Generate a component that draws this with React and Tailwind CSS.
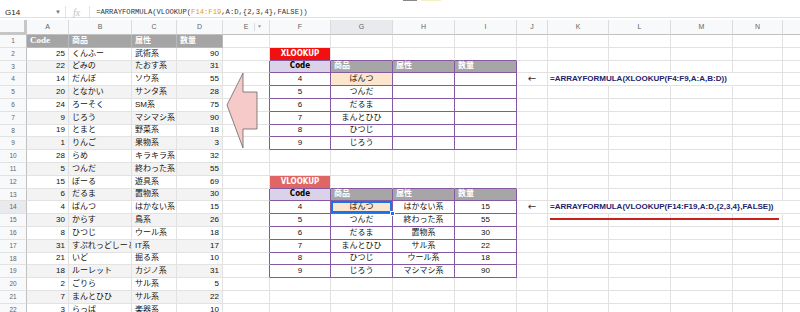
const COLS = ['A', 'B', 'C', 'D', 'E', 'F', 'G', 'H', 'I', 'J', 'K', 'L', 'M', 'N', 'O']

const sheet = [
  [25, 'くんふー', '武術系', 90],
  [22, 'どみの', 'たおす系', 31],
  [14, 'だんぼ', 'ソウ系', 55],
  [20, 'となかい', 'サンタ系', 28],
  [24, 'ろーそく', 'SM系', 75],
  [9, 'じろう', 'マシマシ系', 90],
  [19, 'とまと', '野菜系', 18],
  [1, 'りんご', '果物系', 3],
  [28, 'らめ', 'キラキラ系', 32],
  [5, 'つんだ', '終わった系', 55],
  [15, 'ぼーる', '遊具系', 69],
  [6, 'だるま', '置物系', 30],
  [4, 'ぱんつ', 'はかない系', 15],
  [30, 'からす', '鳥系', 26],
  [8, 'ひつじ', 'ウール系', 18],
  [31, 'すぷれっどしーと', 'IT系', 17],
  [21, 'いど', '掘る系', 10],
  [18, 'ルーレット', 'カジノ系', 31],
  [2, 'ごりら', 'サル系', 5],
  [7, 'まんとひひ', 'サル系', 22],
  [3, 'らっぱ', '楽器系', 10],
]

const lookup = [
  [4, 'ぱんつ', 'はかない系', 15],
  [5, 'つんだ', '終わった系', 55],
  [6, 'だるま', '置物系', 30],
  [7, 'まんとひひ', 'サル系', 22],
  [8, 'ひつじ', 'ウール系', 18],
  [9, 'じろう', 'マシマシ系', 90],
]

const ROWS = Array.from({ length: 22 }, (_, i) => i + 1)

function tableOf(r) {
  if (r >= 2 && r <= 9) return { start: 2, filled: false }
  if (r >= 12 && r <= 19) return { start: 12, filled: true }
  return null
}

function Cell({ r, c }) {
  const base = 'relative flex items-center whitespace-nowrap border-r border-b text-[8px] leading-none'
  const t = tableOf(r)
  const i = t ? r - t.start : -1 // 0 = label, 1 = header, 2.. = data

  // source data A-D
  if ('ABCD'.includes(c)) {
    const ci = 'ABCD'.indexOf(c)
    if (r === 1) {
      return (
        <div className={`${base} overflow-hidden border-[#b9b9b9] bg-[#a5a5a5] px-[3px] font-bold text-white`}>
          <span className={c === 'A' ? "font-['Liberation_Serif',serif] text-[9px]" : ''}>
            {['Code', '商品', '属性', '数量'][ci]}
          </span>
        </div>
      )
    }
    const v = sheet[r - 2][ci]
    return (
      <div
        className={`${base} overflow-hidden border-[#e2e2e2] px-[3px] text-[#111] ${r % 2 ? 'bg-[#f3f3f3]' : 'bg-white'} ${
          ci === 0 || ci === 3 ? 'justify-end' : 'justify-start'
        }`}
      >
        {v}
      </div>
    )
  }

  if (c === 'E') {
    const purple = t && i >= 1
    return (
      <div className={`${base} border-b-[#e2e2e2] ${purple ? 'border-r-[#84599f]' : 'border-r-[#e2e2e2]'}`} />
    )
  }

  if ('FGHI'.includes(c) && t) {
    const ci = 'FGHI'.indexOf(c)
    if (i === 0) {
      if (c === 'F') {
        return (
          <div
            className={`${base} justify-center border-r-[#e2e2e2] border-b-[#84599f] font-['DejaVu_Sans_Condensed','Liberation_Sans_Narrow',sans-serif] text-[6.5px] font-bold text-white ${
              t.filled ? 'bg-[#e06666]' : 'bg-[#f20f0f]'
            }`}
          >
            {t.filled ? 'VLOOKUP' : 'XLOOKUP'}
          </div>
        )
      }
      return <div className={`${base} border-r-[#e2e2e2] border-b-[#84599f]`} />
    }
    if (i === 1) {
      if (c === 'F') {
        return (
          <div className={`${base} justify-center border-[#84599f] bg-[#d9d2e9] font-['DejaVu_Sans_Condensed','Liberation_Sans_Narrow',sans-serif] text-[8px] font-bold text-black`}>
            Code
          </div>
        )
      }
      return (
        <div className={`${base} justify-start border-[#84599f] bg-[#a6a6a6] px-[3px] font-bold text-white`}>
          {['', '商品', '属性', '数量'][ci]}
        </div>
      )
    }
    const row = lookup[i - 2]
    const show = ci <= 1 || t.filled
    const selected = t.filled && i === 2 && c === 'G'
    return (
      <div
        className={`${base} justify-center border-[#84599f] text-[#111] ${i === 2 && c === 'G' ? 'bg-[#fce5cd]' : 'bg-white'} ${
          selected ? 'shadow-[inset_0_0_0_2px_#1a73e8]' : ''
        }`}
      >
        {show ? row[ci] : ''}
        {selected && (
          <span className="absolute -right-[3px] -bottom-[3px] z-10 h-[5px] w-[5px] border border-white bg-[#1a73e8]" />
        )}
      </div>
    )
  }

  // formulas on the right
  if (c === 'J' && (r === 4 || r === 14)) {
    return (
      <div className={`${base} justify-center border-[#e2e2e2] font-['DejaVu_Sans',sans-serif] text-[10px] text-[#333]`}>
        ←
      </div>
    )
  }
  if (c === 'K' && (r === 4 || r === 14)) {
    return (
      <div className={`${base} z-10 justify-start border-b-[#e2e2e2] border-r-transparent px-[2px] font-bold text-[#23236e]`}>
        {r === 4 ? '=ARRAYFORMULA(XLOOKUP(F4:F9,A:A,B:D))' : '=ARRAYFORMULA(VLOOKUP(F14:F19,A:D,{2,3,4},FALSE))'}
      </div>
    )
  }
  const hidden = (r === 4 && 'LM'.includes(c)) || (r === 14 && 'LMN'.includes(c))
  return (
    <div className={`${base} border-b-[#e2e2e2] ${hidden ? 'border-r-transparent' : 'border-r-[#e2e2e2]'}`} />
  )
}

export default function App() {
  return (
    <div className="relative h-[312px] w-[800px] overflow-hidden bg-white font-['Liberation_Sans','Noto_Sans_CJK_JP',sans-serif]">
      {/* toolbar remnants */}
      <div className="flex h-[8px] items-start">
        <div className="ml-[403px] h-[1px] w-[14px] bg-[#888]" />
        <div className="ml-[4px] h-[1px] w-[20px] bg-[#f5efc8]" />
      </div>

      {/* formula bar */}
      <div className="flex h-[10px] items-center border-b border-[#e0e0e0] text-[8px] text-[#222]">
        <span className="ml-[5px] w-[50px]">G14</span>
        <span className="text-[6px] text-[#777]">▼</span>
        <span className="ml-[4px] h-[13px] w-px bg-[#e3e3e3]" />
        <span className="ml-[7px] font-['Liberation_Serif',serif] text-[10px] italic text-[#c4c4c4]">fx</span>
        <span className="ml-[9px] h-[13px] w-px bg-[#e3e3e3]" />
        <span className="ml-[6px] font-['Liberation_Mono',monospace] text-[7.2px] text-[#333]">
          =ARRAYFORMULA(VLOOKUP(<span className="text-[#e0a020]">F14:F19</span>,A:D,{'{'}2,3,4{'}'},FALSE))
        </span>
      </div>

      {/* sheet grid */}
      <div className="mt-[2px] grid grid-cols-[27px_42px_63px_45px_46px_47px_61px_62px_62px_62px_31px_61px_62px_62px_50px_60px] grid-rows-[15px_repeat(22,12.8px)]">
        <div className="border-r-[3px] border-b-[3px] border-[#c7c7c7] bg-[#f8f9fa]" />
        {COLS.map((c) => (
          <div
            key={c}
            className={`relative flex items-center justify-center border-r border-b border-r-[#dadce0] border-b-[#c0c0c0] text-[7px] text-[#5f6368] ${
              c === 'G' ? 'bg-[#e8eaed]' : 'bg-[#f8f9fa]'
            }`}
          >
            {c}
            {c === 'E' && (
              <span className="absolute right-[7px] flex h-[8px] items-center border-l border-[#dadce0] pl-[2px] text-[5px] text-[#999]">
                ▼
              </span>
            )}
          </div>
        ))}
        {ROWS.map((r) => (
          <div key={r} className="contents">
            <div
              className={`flex items-center justify-center border-r border-b border-r-[#c0c0c0] border-b-[#e2e2e2] text-[6.5px] text-[#5f6368] ${
                r === 14 ? 'bg-[#e8eaed]' : 'bg-[#f8f9fa]'
              }`}
            >
              {r}
            </div>
            {COLS.map((c) => (
              <Cell key={c} r={r} c={c} />
            ))}
          </div>
        ))}
      </div>

      {/* pink arrow shape */}
      <svg className="absolute left-[226px] top-[72px]" width="33" height="78" viewBox="0 0 33 78">
        <polygon
          points="1,33 17,1 17,20 31,20 31,57 17,57 17,76"
          fill="#f7caca"
          stroke="#666"
          strokeWidth="0.8"
        />
      </svg>

      {/* red underline under the VLOOKUP formula */}
      <div className="absolute left-[550px] top-[218px] h-[2px] w-[229px] bg-[#c9211e]" />
    </div>
  )
}
